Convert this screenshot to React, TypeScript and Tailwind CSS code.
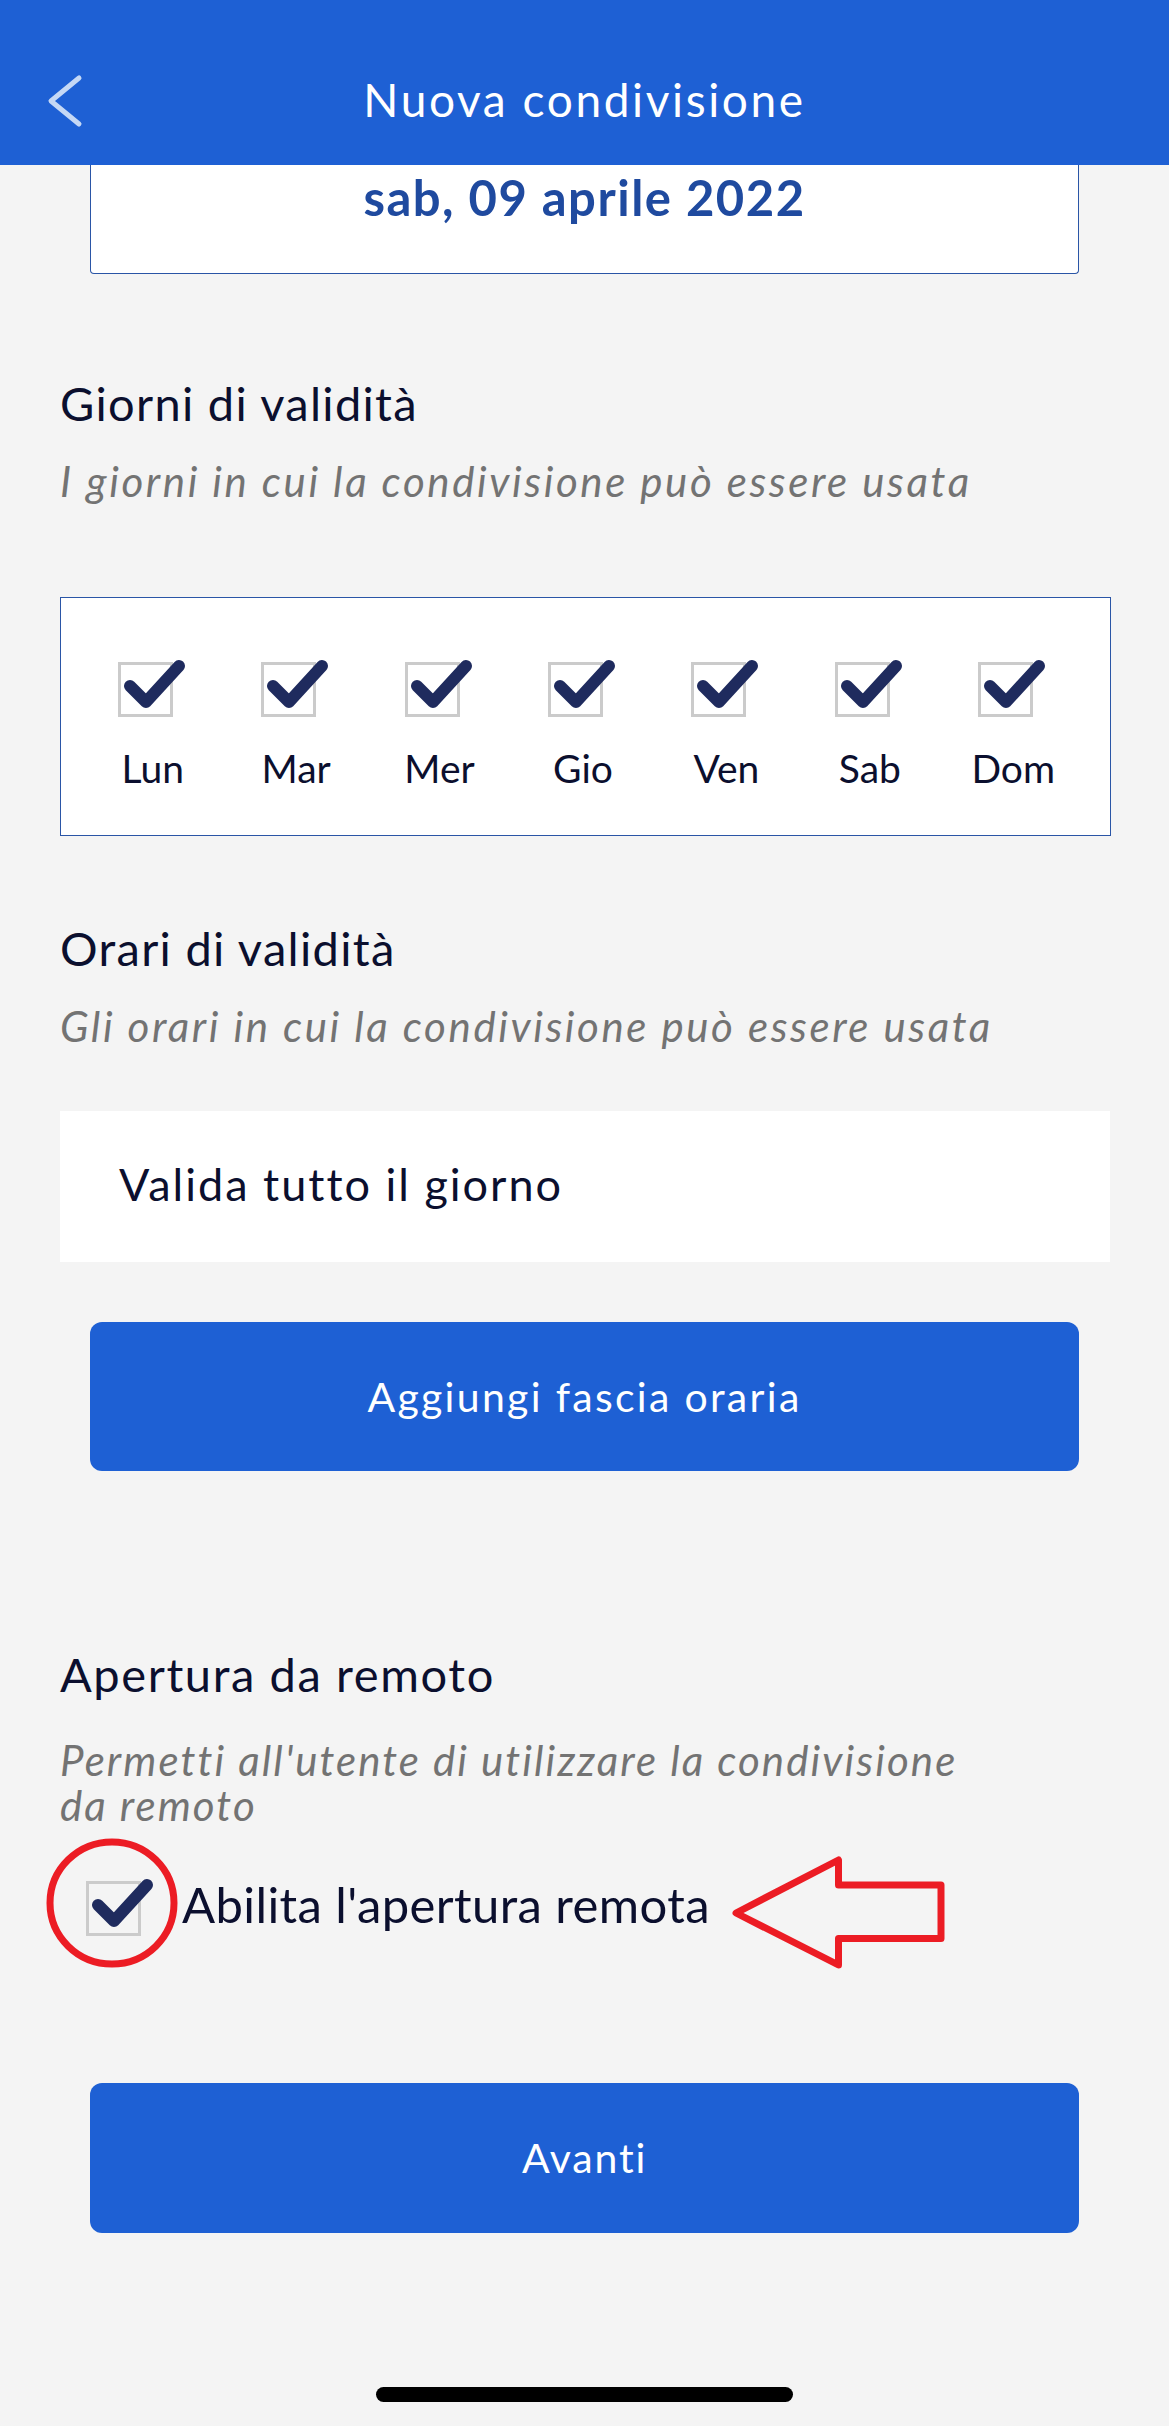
import React from "react";

const days = ["Lun", "Mar", "Mer", "Gio", "Ven", "Sab", "Dom"];

function CheckBox() {
  return (
    <svg width="70" height="60" viewBox="0 0 70 60" className="block">
      <rect x="1.5" y="4.5" width="52" height="52" fill="none" stroke="#cbcbcb" strokeWidth="3" />
      <polyline
        points="12,27 28,43 61,7"
        fill="none"
        stroke="#1f2b5e"
        strokeWidth="12"
        strokeLinecap="round"
        strokeLinejoin="round"
      />
    </svg>
  );
}

export default function App() {
  return (
    <div className="min-h-[2426px] w-[1169px] bg-[#f4f4f4] font-['Lato',sans-serif] text-[#0b0f2e] pb-[24px]">
      {/* Header */}
      <div className="h-[165px] bg-[#1e60d4] pt-[70px]">
        <div className="grid h-[60px] grid-cols-[1fr_auto_1fr] items-center">
          <div className="pl-[45px]">
            <svg width="40" height="60" viewBox="0 0 40 60" className="block">
              <polyline
                points="34,8 6,31 34,54"
                fill="none"
                stroke="#c5d8f5"
                strokeWidth="5"
                strokeLinecap="round"
                strokeLinejoin="round"
              />
            </svg>
          </div>
          <div className="text-[46px] leading-[60px] font-normal tracking-[2.6px] text-white">Nuova condivisione</div>
          <div />
        </div>
      </div>

      {/* Date box */}
      <div className="mx-[90px] h-[109px] rounded-b-[4px] border-x-[1.5px] border-b-[1.5px] border-[#2a55a6] bg-white pt-[7px] text-center">
        <div className="text-[49px] leading-[50px] font-bold tracking-[1.5px] text-[#1f4a9f]">sab, 09 aprile 2022</div>
      </div>

      {/* Giorni */}
      <div className="mt-[101px] pl-[60px] text-[47px] leading-[56px] tracking-[1.3px]">Giorni di validità</div>
      <div className="mt-[25px] pl-[60px] text-[42px] leading-[50px] italic tracking-[2.6px] text-[#737373]">
        I giorni in cui la condivisione può essere usata
      </div>

      <div className="mt-[91px] ml-[60px] h-[239px] w-[1051px] border border-[#2a55a6] bg-white pl-[20px] pr-[25px] pt-[61px]">
        <div className="grid grid-cols-7">
          {days.map((d) => (
            <div key={d} className="flex flex-col items-center">
              <CheckBox />
              <div className="mt-[26px] text-[39px] leading-[46px]">{d}</div>
            </div>
          ))}
        </div>
      </div>

      {/* Orari */}
      <div className="mt-[84px] pl-[60px] text-[47px] leading-[56px] tracking-[1.3px]">Orari di validità</div>
      <div className="mt-[25px] pl-[60px] text-[42px] leading-[50px] italic tracking-[2.6px] text-[#737373]">
        Gli orari in cui la condivisione può essere usata
      </div>

      <div className="mt-[60px] ml-[60px] flex h-[151px] w-[1050px] items-center bg-white pl-[59px] pb-[6px]">
        <div className="text-[45px] leading-[54px] tracking-[2px]">Valida tutto il giorno</div>
      </div>

      <div className="mt-[60px] mx-[90px] flex h-[149px] items-center justify-center rounded-[12px] bg-[#1e60d4]">
        <span className="text-[41px] leading-[50px] font-normal tracking-[2.3px] text-white">Aggiungi fascia oraria</span>
      </div>

      {/* Apertura da remoto */}
      <div className="mt-[175px] pl-[60px] text-[47px] leading-[56px] tracking-[1.6px]">Apertura da remoto</div>
      <div className="mt-[36px] w-[990px] pl-[60px] text-[42px] leading-[45px] italic tracking-[2.1px] text-[#737373]">
        Permetti all'utente di utilizzare la condivisione da remoto
      </div>

      <div className="relative mt-[50px] flex items-start">
        <div className="ml-[86px]">
          <CheckBox />
        </div>
        <div className="ml-[26px] mt-[-2px] text-[49px] leading-[56px] tracking-[0.4px]">Abilita l'apertura remota</div>

        {/* red circle */}
        <svg
          width="132"
          height="130"
          viewBox="0 0 132 130"
          className="absolute left-[46px] top-[-40px]"
        >
          <ellipse cx="66" cy="65" rx="62" ry="61" fill="none" stroke="#ec1c24" strokeWidth="7" />
        </svg>

        {/* red arrow */}
        <svg
          width="225"
          height="125"
          viewBox="0 0 225 125"
          className="absolute left-[725px] top-[-28px]"
        >
          <polygon
            points="11,63 113.5,10 113.5,35 216,35 216,88.5 113.5,88.5 113.5,115"
            fill="none"
            stroke="#ec1c24"
            strokeWidth="7"
            strokeLinejoin="round"
          />
        </svg>
      </div>

      <div className="mt-[145px] mx-[90px] flex h-[150px] items-center justify-center rounded-[12px] bg-[#1e60d4]">
        <span className="text-[41px] leading-[50px] font-normal tracking-[1.8px] text-white">Avanti</span>
      </div>

      <div className="mx-auto mt-[154px] h-[15px] w-[417px] rounded-full bg-black" />
    </div>
  );
}
